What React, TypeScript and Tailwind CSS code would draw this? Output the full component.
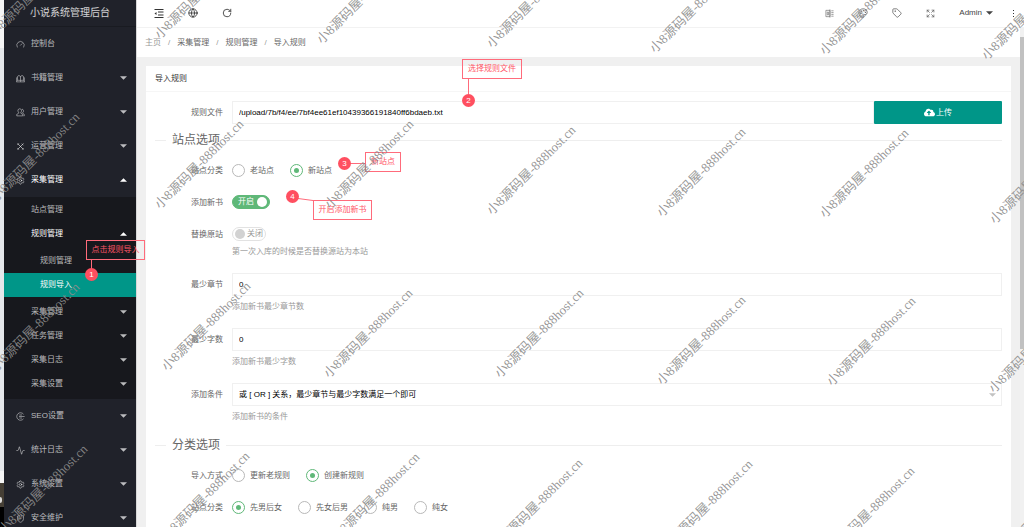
import type { ReactNode } from 'react';
import { FaCloudUploadAlt } from 'react-icons/fa';
import {
  Activity,
  Expand,
  Gauge,
  Globe,
  Palette,
  RotateCw,
  Settings,
  ShieldCheck,
  Tag,
} from 'lucide-react';

type MenuItem = { label: string; icon: ReactNode; arrow?: boolean; open?: boolean };

const iconClass = 'size-[9px] shrink-0';

const topMenu: MenuItem[] = [
  { label: '控制台', icon: <Gauge className={iconClass} /> },
  { label: '书籍管理', icon: <BookIcon />, arrow: true },
  { label: '用户管理', icon: <UserIcon />, arrow: true },
  { label: '运营管理', icon: <ToolsIcon />, arrow: true },
  { label: '采集管理', icon: <Settings className={iconClass} />, arrow: true, open: true },
];

const bottomMenu: MenuItem[] = [
  { label: 'SEO设置', icon: <SeoIcon />, arrow: true },
  { label: '统计日志', icon: <Activity className={iconClass} />, arrow: true },
  { label: '系统设置', icon: <Settings className={iconClass} />, arrow: true },
  { label: '安全维护', icon: <ShieldCheck className={iconClass} />, arrow: true },
];

// center points of the repeated site mark
const marks = [
  [33, -7], [199, -6], [361, -1], [531, 3], [694, 8], [864, 10], [1026, 15],
  [35, 157], [199, 164], [369, 164], [531, 170], [701, 172], [864, 173], [1034, 179],
  [35, 327], [206, 326], [368, 333], [539, 333], [701, 340], [871, 341], [1033, 348],
  [43, 489], [205, 496], [375, 497], [538, 503], [708, 504], [870, 511], [1040, 515],
];

function Caret({ up }: { up?: boolean }) {
  return (
    <svg viewBox="0 0 8 4" className="h-1 w-[7px] shrink-0" fill="currentColor" aria-hidden="true">
      {up ? <path d="M0 4h8L4 0z" /> : <path d="M0 0h8L4 4z" />}
    </svg>
  );
}

function BookIcon() {
  return (
    <svg viewBox="0 0 24 24" className={iconClass} fill="none" stroke="currentColor" strokeWidth="2" aria-hidden="true">
      <path d="M12 7C11 4 5 3 4 7v11c2-2 6-2 8 1 2-3 6-3 8-1V7c-1-4-7-3-8 0v12" />
      <path d="M1 9v12h22V9" />
    </svg>
  );
}

function UserIcon() {
  return (
    <svg viewBox="0 0 24 24" className={iconClass} fill="none" stroke="currentColor" strokeWidth="2" aria-hidden="true">
      <path d="M10 2a5 5 0 0 1 3 9v3l5 3v4H2v-4l5-3v-3a5 5 0 0 1 3-9z" />
      <path d="M16 3a5 5 0 0 1 2 9v2l4 3v4h-2" />
    </svg>
  );
}

function ToolsIcon() {
  return (
    <svg viewBox="0 0 24 24" className={iconClass} fill="none" stroke="currentColor" strokeWidth="2.5" aria-hidden="true">
      <path d="M4 4l16 16M20 4L4 20" />
      <path d="M3 8l5-5M16 21l5-5M15 4l5 5M3 16l5 5" strokeWidth="1.8" />
    </svg>
  );
}

function SeoIcon() {
  return (
    <svg viewBox="0 0 24 24" className={iconClass} fill="none" stroke="currentColor" strokeWidth="2" aria-hidden="true">
      <path d="M20 6A10 10 0 1 0 20 18" />
      <path d="M8 12h15M9 8h7M9 16h7" />
    </svg>
  );
}

function OutdentIcon() {
  return (
    <svg viewBox="0 0 20 18" className="h-[9px] w-[10px]" fill="none" stroke="currentColor" strokeWidth="2" aria-hidden="true">
      <path d="M1 1h18M8 6h11M8 12h11M1 17h18" />
      <path d="M5 6v6L1 9z" fill="currentColor" stroke="none" />
    </svg>
  );
}

function NoteIcon() {
  return (
    <svg viewBox="0 0 20 20" className="size-[9px]" fill="none" stroke="currentColor" strokeWidth="1.4" aria-hidden="true">
      <path d="M2 3h9v14H2zM11 1v18M5 7h3v6H5zM14 4h5M14 8h5M14 12h5M14 16h5" />
    </svg>
  );
}

function NavLink({ item }: { item: MenuItem }) {
  return (
    <a
      href="#"
      className={`flex h-[34px] items-center gap-[6px] pr-[9px] pl-3 ${item.open ? 'text-white' : 'text-white/70'}`}
    >
      <span className="text-white/60">{item.icon}</span>
      <span className="flex-1">{item.label}</span>
      {item.arrow && <Caret up={item.open} />}
    </a>
  );
}

function ChildLink({ label, arrow, open }: { label: string; arrow?: boolean; open?: boolean }) {
  return (
    <a href="#" className={`flex h-6 items-center pr-[9px] pl-[27px] ${open ? 'text-white' : 'text-white/70'}`}>
      <span className="flex-1">{label}</span>
      {arrow && <Caret up={open} />}
    </a>
  );
}

function Sidebar() {
  return (
    <nav className="w-[132px] shrink-0 bg-[#20222a]">
      <h1 className="flex h-[27px] items-center justify-center border-b border-black/20 text-[10px] text-white/80">
        小说系统管理后台
      </h1>
      {topMenu.map((item) => (
        <NavLink key={item.label} item={item} />
      ))}
      <div className="bg-[#17181d] pt-px pb-[3px]">
        <ChildLink label="站点管理" />
        <ChildLink label="规则管理" arrow open />
        <div className="py-[3px]">
          <a href="#" className="flex h-6 items-center pl-9 text-white/70">规则管理</a>
          <a href="#" className="flex h-6 items-center bg-[#009688] pl-9 text-white">规则导入</a>
        </div>
        <ChildLink label="采集管理" arrow />
        <ChildLink label="任务管理" arrow />
        <ChildLink label="采集日志" arrow />
        <ChildLink label="采集设置" arrow />
      </div>
      {bottomMenu.map((item) => (
        <NavLink key={item.label} item={item} />
      ))}
    </nav>
  );
}

function TopBar() {
  return (
    <header className="flex h-7 shrink-0 items-center justify-between border-b border-[#f2f2f2] bg-white pr-[10px] pb-px pl-[17px] text-[#333]">
      <div className="flex items-center gap-6">
        <button aria-label="侧边伸缩"><OutdentIcon /></button>
        <button aria-label="前台"><Globe className="size-[10px]" /></button>
        <button aria-label="刷新"><RotateCw className="size-[10px]" /></button>
      </div>
      <div className="flex items-center gap-6 text-[#666]">
        <button aria-label="便签"><NoteIcon /></button>
        <button aria-label="主题"><Palette className="size-[10px]" /></button>
        <button aria-label="标签"><Tag className="size-[10px]" /></button>
        <button aria-label="全屏"><Expand className="size-[9px]" /></button>
        <button className="flex items-center gap-1 text-[#444]">
          Admin
          <Caret />
        </button>
        <button aria-label="更多" className="-ml-1 flex flex-col gap-[2px]">
          <i className="size-px bg-[#333]" />
          <i className="size-px bg-[#333]" />
          <i className="size-px bg-[#333]" />
        </button>
      </div>
    </header>
  );
}

function Breadcrumb() {
  const items = ['采集管理', '规则管理', '导入规则'];
  return (
    <div className="flex h-[29px] items-center gap-[7px] bg-white pl-2 text-[#666]">
      <a href="#" className="text-[#999]">主页</a>
      {items.map((item) => (
        <span key={item} className="flex gap-[7px]">
          <span className="text-[#999]">/</span>
          <a href="#">{item}</a>
        </span>
      ))}
    </div>
  );
}

const fieldClass = 'h-[23px] w-full border border-[#f0f0f0] bg-white px-[6px] text-black outline-none';

function Row({ label, id, help, children }: { label: string; id?: string; help?: string; children: ReactNode }) {
  return (
    <div className={`flex gap-[9px] ${help ? 'mb-[15px]' : 'mb-[9px]'}`}>
      <label htmlFor={id} className="h-[23px] w-[68px] shrink-0 text-right leading-[23px] text-[#666]">
        {label}
      </label>
      <div className="min-w-0 flex-1">
        {children}
        {help && <p className="mt-[5px] leading-3 text-[#999]">{help}</p>}
      </div>
    </div>
  );
}

function Legend({ children }: { children: ReactNode }) {
  return (
    <div className="mb-3 flex h-[14px] items-center gap-[6px]">
      <span className="h-px w-[11px] bg-[#eee]" />
      <h2 className="text-xs text-[#666]">{children}</h2>
      <span className="h-px flex-1 bg-[#eee]" />
    </div>
  );
}

function RadioGroup({ name, options, value }: { name: string; options: string[]; value: string }) {
  return (
    <div className="flex h-[23px] items-center gap-4 text-[#666]">
      {options.map((option) => (
        <label key={option} className="flex items-center gap-[5px]">
          <input
            type="radio"
            name={name}
            defaultChecked={option === value}
            className="grid size-[13px] appearance-none place-content-center rounded-full border border-[#b8b8b8] before:size-[5px] before:rounded-full checked:border-[#5fb878] checked:before:bg-[#5fb878]"
          />
          {option}
        </label>
      ))}
    </div>
  );
}

function Switch({ id, on }: { id: string; on?: boolean }) {
  return (
    <label
      className={`relative mt-1 flex h-[14px] w-fit items-center rounded-full border ${
        on
          ? 'gap-[3px] border-[#5fb878] bg-[#5fb878] pr-[2px] pl-[5px] text-white'
          : 'flex-row-reverse gap-[2px] border-[#e2e2e2] bg-white px-[2px] text-[#999]'
      }`}
    >
      <input id={id} type="checkbox" defaultChecked={on} className="absolute inset-0 opacity-0" />
      {on ? '开启' : '关闭'}
      <span className={`size-[10px] rounded-full ${on ? 'bg-white' : 'bg-[#d2d2d2]'}`} />
    </label>
  );
}

function RuleForm() {
  return (
    <form className="px-[9px] pt-[9px]">
      <Row label="规则文件" id="file">
        <div className="flex">
          <input id="file" className={fieldClass} defaultValue="/upload/7b/f4/ee/7bf4ee61ef10439366191840ff6bdaeb.txt" />
          <button
            type="button"
            className="flex h-[23px] w-32 shrink-0 items-center justify-center gap-px rounded-[1px] bg-[#009688] text-white"
          >
            <FaCloudUploadAlt className="size-[11px]" />
            上传
          </button>
        </div>
      </Row>
      <Legend>站点选项</Legend>
      <Row label="站点分类">
        <RadioGroup name="site" options={['老站点', '新站点']} value="新站点" />
      </Row>
      <Row label="添加新书" id="add">
        <Switch id="add" on />
      </Row>
      <Row label="替换原站" id="replace" help="第一次入库的时候是否替换源站为本站">
        <Switch id="replace" />
      </Row>
      <Row label="最少章节" id="chapters" help="添加新书最少章节数">
        <input id="chapters" className={fieldClass} defaultValue="0" />
      </Row>
      <Row label="最少字数" id="words" help="添加新书最少字数">
        <input id="words" className={fieldClass} defaultValue="0" />
      </Row>
      <Row label="添加条件" id="condition" help="添加新书的条件">
        <div className="relative text-[#c2c2c2]">
          <select id="condition" className={`${fieldClass} appearance-none`}>
            <option>或 [ OR ] 关系，最少章节与最少字数满足一个即可</option>
          </select>
          <span className="pointer-events-none absolute top-[10px] right-[6px]">
            <Caret />
          </span>
        </div>
      </Row>
      <Legend>分类选项</Legend>
      <Row label="导入方式">
        <RadioGroup name="mode" options={['更新老规则', '创建新规则']} value="创建新规则" />
      </Row>
      <Row label="站点分类">
        <RadioGroup name="category" options={['先男后女', '先女后男', '纯男', '纯女']} value="先男后女" />
      </Row>
    </form>
  );
}

const noteBox = 'absolute flex h-5 items-center justify-center border border-[#ff6b7b] text-[#ff5566]';
const noteDot = 'absolute flex size-[13px] items-center justify-center rounded-full bg-[#ff4f60] text-white';

function Annotations() {
  return (
    <div className="pointer-events-none absolute inset-0">
      <svg className="absolute inset-0 size-full" stroke="#ff6b7b" fill="none" aria-hidden="true">
        <path d="M91.5 260v10M468.5 79v15M350 163.500h15M298 198.500l15 2" />
      </svg>
      <span className={`${noteBox} top-[240px] left-[86px] w-[59px]`}>点击规则导入</span>
      <span className={`${noteDot} top-[268px] left-[85px]`}>1</span>
      <span className={`${noteBox} top-[59px] left-[462px] w-[60px]`}>选择规则文件</span>
      <span className={`${noteDot} top-[94px] left-[462px]`}>2</span>
      <span className={`${noteBox} top-[152px] left-[365px] w-9`}>新站点</span>
      <span className={`${noteDot} top-[157px] left-[338px]`}>3</span>
      <span className={`${noteBox} top-[200px] left-[313px] w-[59px]`}>开启添加新书</span>
      <span className={`${noteDot} top-[190px] left-[286px]`}>4</span>
    </div>
  );
}

function Watermark() {
  return (
    <div className="pointer-events-none absolute inset-0 overflow-hidden font-['Liberation_Serif','Noto_Sans_CJK_SC',serif] text-[13px] leading-none text-[#8c8c8c]/90">
      {marks.map(([x, y]) => (
        <span
          key={`${x}-${y}`}
          className="absolute -translate-x-1/2 -translate-y-1/2 -rotate-45 whitespace-nowrap"
          style={{ left: x, top: y }}
        >
          小8源码屋-888host.cn
        </span>
      ))}
    </div>
  );
}

export default function App() {
  return (
    <div className="relative flex h-screen overflow-hidden bg-[#f0f0f0] font-['Liberation_Sans','Noto_Sans_CJK_SC',sans-serif] text-[8px] leading-3">
      {/* Window behind the panel */}
      <div className="flex w-1 shrink-0 flex-col">
        <div className="h-12 bg-[#f5f5f5]" />
        <div className="flex-1 bg-[#e4e7ea]" />
        <div className="h-3 bg-[#f5f5f5]" />
        <div className="flex h-6 items-end bg-[#453f35] pb-1">
          <i className="h-[6px] w-[2px] rounded-r-full bg-white/80" />
        </div>
        <div className="h-5 bg-black" />
      </div>
      <Sidebar />
      <main className="flex min-w-0 flex-1 flex-col border-l border-[#d8d8d8]">
        <TopBar />
        <div className="flex min-h-0 flex-1">
          <div className="min-w-0 flex-1 overflow-hidden">
            <Breadcrumb />
            <section className="mx-[9px] mt-[9px] bg-white pb-4">
              <h2 className="flex h-[26px] items-center border-b border-[#f6f6f6] px-[9px] text-[#333]">导入规则</h2>
              <RuleForm />
            </section>
          </div>
          <div className="w-1 shrink-0 bg-[#f1f1f1] pt-[9px]">
            <div className="h-[312px] bg-[#c1c1c1]" />
          </div>
        </div>
      </main>
      <Annotations />
      <Watermark />
    </div>
  );
}
